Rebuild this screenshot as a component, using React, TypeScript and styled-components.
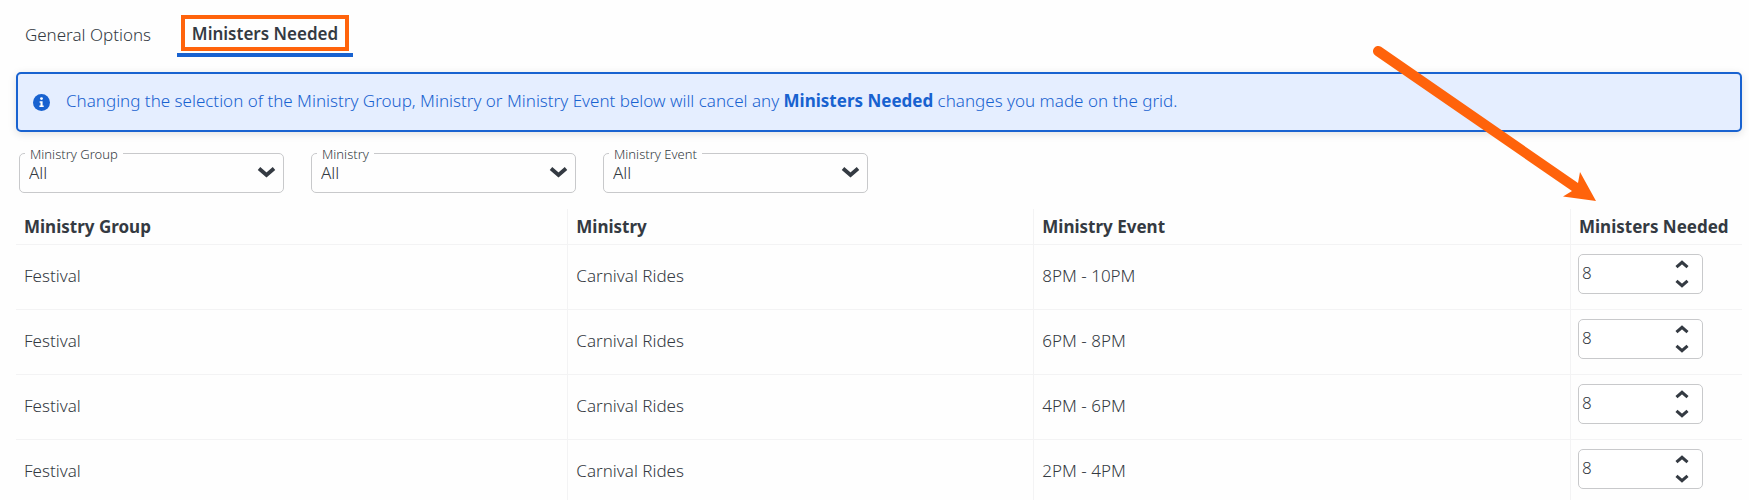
import React, { useState } from "react";
import styled, { createGlobalStyle } from "styled-components";

const ink = "#343a42";
const blue = "#1862d0";
const orange = "#ff630b";
const line = "#f3f3f4";
const control = "#c8c9cb";

const GlobalStyle = createGlobalStyle`
  *, *::before, *::after { box-sizing: border-box; }
  body {
    margin: 0;
    background: #fefefe;
    color: ${ink};
    font: 300 17px/24px "Noto Sans", sans-serif;
  }
  button, input, select { font: inherit; color: inherit; }
`;

const Page = styled.main`
  position: relative;
  padding: 15px 7px 0 16px;
`;

const Tabs = styled.div`
  display: flex;
  align-items: flex-start;
  gap: 25px;
  padding-left: 8px;
`;

const Tab = styled.button<{ $active?: boolean }>`
  display: flex;
  justify-content: center;
  height: 42px;
  min-width: ${(p) => (p.$active ? "176px" : "128px")};
  padding: ${(p) => (p.$active ? "0 4px" : "8px 0 0")};
  border: 0;
  border-bottom: 4px solid ${(p) => (p.$active ? blue : "transparent")};
  background: none;
  font-weight: ${(p) => (p.$active ? 600 : 300)};
  line-height: 24px;
  white-space: nowrap;
  cursor: pointer;
`;

const Highlight = styled.span`
  flex: 1;
  height: 36px;
  border: 4px solid ${orange};
  line-height: 30px;
`;

const Notice = styled.div`
  display: flex;
  align-items: center;
  gap: 16px;
  min-height: 60px;
  margin-top: 15px;
  padding: 0 15px 3px;
  border: 2px solid ${blue};
  border-radius: 5px;
  background: #e5eeff;
  box-shadow: 0 2px 8px rgba(0, 0, 0, 0.12);
  color: ${blue};

  svg { flex: none; margin-top: 4px; }
  p { margin: 0; }
  strong { font-weight: 700; }
`;

const Filters = styled.div`
  display: flex;
  gap: 27px;
  margin-top: 21px;
  padding-left: 3px;
`;

const Field = styled.div`
  position: relative;
  width: 265px;

  label {
    position: absolute;
    top: -8px;
    left: 6px;
    padding: 0 5px;
    background: #fefefe;
    font-size: 13px;
    line-height: 18px;
  }
  svg {
    position: absolute;
    top: 13px;
    right: 8px;
    pointer-events: none;
  }
`;

const Select = styled.select`
  display: block;
  width: 100%;
  height: 40px;
  padding: 0 32px 0 9px;
  border: 1px solid ${control};
  border-radius: 5px;
  appearance: none;
  background: transparent;
`;

const Grid = styled.table`
  width: 100%;
  margin-top: 16px;
  border-collapse: separate;
  border-spacing: 0;
  table-layout: fixed;
`;

const Col = styled.col<{ $w?: string }>`
  width: ${(p) => p.$w ?? "auto"};
`;

const HeadCell = styled.th`
  height: 36px;
  padding: 0 8px;
  border-right: 1px solid ${line};
  border-bottom: 1px solid ${line};
  font-weight: 700;
  text-align: left;
  white-space: nowrap;
  &:last-child { border-right: 0; }
`;

const Cell = styled.td`
  height: 65px;
  padding: 0 8px 2px;
  border-right: 1px solid ${line};
  border-bottom: 1px solid ${line};
  &:last-child { padding: 0 7px 6px; border-right: 0; }
`;

const Stepper = styled.div`
  display: flex;
  width: 125px;
  height: 40px;
  border: 1px solid ${control};
  border-radius: 5px;
  background: #fff;

  input {
    flex: 1;
    min-width: 0;
    padding: 0 3px 2px;
    border: 0;
    background: none;
    outline: 0;
    appearance: textfield;
  }
  input::-webkit-inner-spin-button { appearance: none; margin: 0; }
`;

const StepButtons = styled.div`
  display: flex;
  flex-direction: column;
  width: 41px;
`;

const StepButton = styled.button`
  display: flex;
  flex: 1;
  align-items: center;
  justify-content: center;
  padding: 0;
  border: 0;
  background: none;
`;

const Pointer = styled.svg`
  position: absolute;
  top: 45px;
  right: 152px;
  pointer-events: none;
`;

const Chevron = ({ up, small }: { up?: boolean; small?: boolean }) => (
  <svg width={small ? 14 : 19} height={small ? 9 : 12} viewBox="0 0 19 12" fill="none" aria-hidden="true">
    <path d={up ? "M2 9.5 9.5 3 17 9.5" : "M2 2.5 9.5 9 17 2.5"} stroke={ink} strokeWidth={small ? 4.2 : 3.8} />
  </svg>
);

const filters = ["Ministry Group", "Ministry", "Ministry Event"];
const events = ["8PM - 10PM", "6PM - 8PM", "4PM - 6PM", "2PM - 4PM"];

export default function App() {
  const [needed, setNeeded] = useState(events.map(() => 8));
  const change = (row: number, value: number) =>
    setNeeded((all) => all.map((n, i) => (i === row ? Math.max(0, value) : n)));

  return (
    <Page>
      <GlobalStyle />
      <Tabs role="tablist">
        <Tab role="tab" aria-selected={false}>General Options</Tab>
        <Tab role="tab" aria-selected $active>
          <Highlight>Ministers Needed</Highlight>
        </Tab>
      </Tabs>

      <Notice role="status">
        <svg width="17" height="17" viewBox="0 0 17 17" aria-hidden="true">
          <circle cx="8.5" cy="8.5" r="8.5" fill={blue} />
          <circle cx="8.5" cy="4.6" r="1.4" fill="#fff" />
          <path d="M6.6 7.2H9.6V11.4H10.7V13H6.4V11.4H7.5V8.8H6.6Z" fill="#fff" />
        </svg>
        <p>
          Changing the selection of the Ministry Group, Ministry or Ministry Event below will cancel any{" "}
          <strong>Ministers Needed</strong> changes you made on the grid.
        </p>
      </Notice>

      <Filters>
        {filters.map((name, i) => (
          <Field key={name}>
            <Select id={`filter-${i}`}>
              <option>All</option>
            </Select>
            <label htmlFor={`filter-${i}`}>{name}</label>
            <Chevron />
          </Field>
        ))}
      </Filters>

      <Grid>
        <colgroup>
          <Col $w="32%" />
          <Col $w="27%" />
          <Col />
          <Col $w="171px" />
        </colgroup>
        <thead>
          <tr>
            {[...filters, "Ministers Needed"].map((name) => (
              <HeadCell key={name} scope="col">{name}</HeadCell>
            ))}
          </tr>
        </thead>
        <tbody>
          {events.map((event, row) => (
            <tr key={event}>
              <Cell>Festival</Cell>
              <Cell>Carnival Rides</Cell>
              <Cell>{event}</Cell>
              <Cell>
                <Stepper>
                  <input
                    type="number"
                    aria-label={`Ministers needed, ${event}`}
                    value={needed[row]}
                    onChange={(e) => change(row, Number(e.target.value))}
                  />
                  <StepButtons>
                    <StepButton aria-label="Increase" onClick={() => change(row, needed[row] + 1)}>
                      <Chevron up small />
                    </StepButton>
                    <StepButton aria-label="Decrease" onClick={() => change(row, needed[row] - 1)}>
                      <Chevron small />
                    </StepButton>
                  </StepButtons>
                </Stepper>
              </Cell>
            </tr>
          ))}
        </tbody>
      </Grid>

      <Pointer width="225" height="157" viewBox="0 0 225 157" aria-hidden="true">
        <path
          d="M9 1.7 206 138 208 127 224 156 191 151.5 200 146 3 10.3A5.25 5.25 0 0 1 9 1.7Z"
          fill={orange}
        />
      </Pointer>
    </Page>
  );
}
